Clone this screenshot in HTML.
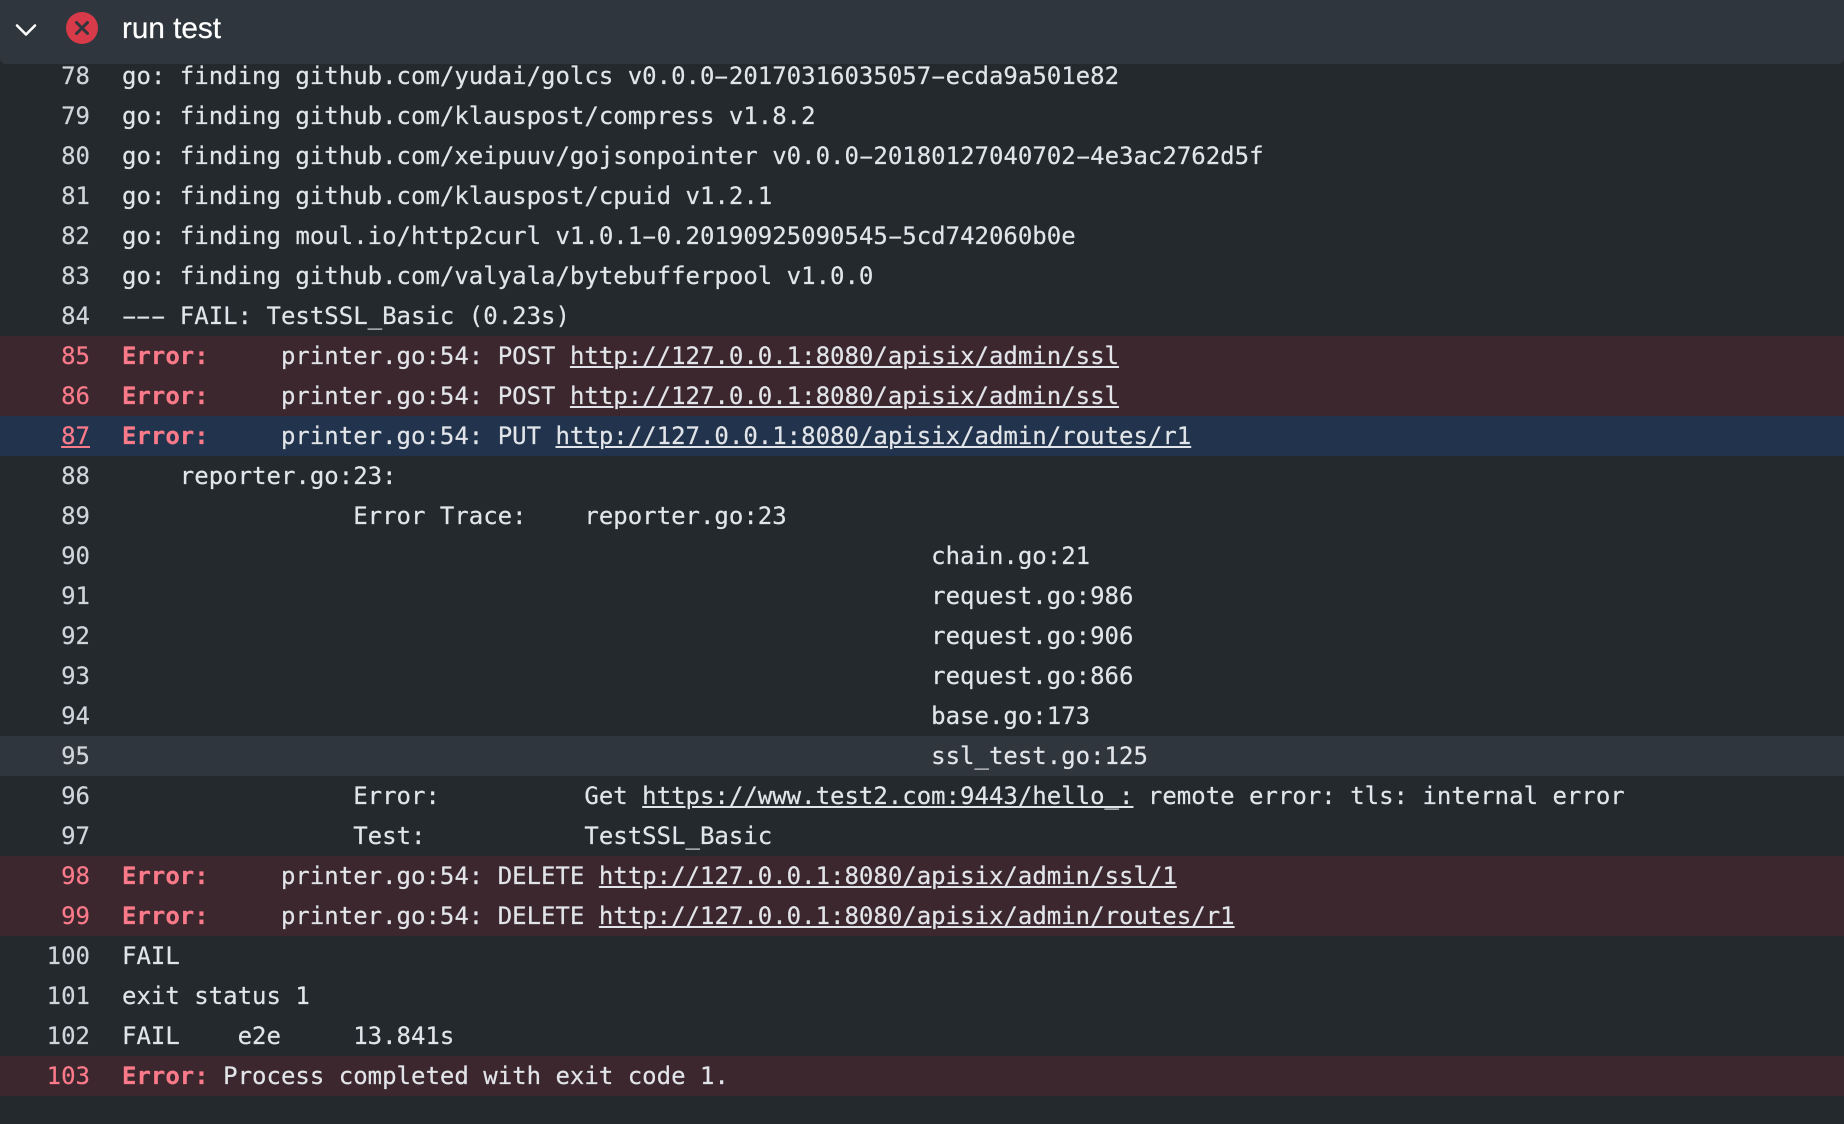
<!DOCTYPE html>
<html><head><meta charset="utf-8"><style>
html,body{margin:0;padding:0;background:#24292e}
body{width:1844px;height:1124px;overflow:hidden;position:relative}
#log{position:absolute;left:0;top:56px;width:1844px;font:24px/40px "DejaVu Sans Mono",monospace;color:#e1e4e8;-webkit-text-stroke:.2px currentColor}
.r{height:40px;position:relative;white-space:pre}
.n{position:absolute;left:0;width:90px;text-align:right;color:#d1d5da}
.t{position:absolute;left:122px}
.e{background:#3c272e}.e .n{color:#fb7a8a}
.b{background:#22344d}
.h{background:#2f363d}
b{color:#fb7a8a;font-weight:bold}
u{text-underline-offset:2px;text-decoration-thickness:2px}
i{font-style:normal;display:inline-block;transform:scaleX(1.85)}
#hd{position:absolute;left:0;top:0;width:1844px;height:64px;background:#2f363d;border-radius:0 0 6px 6px}
#ttl{position:absolute;left:122px;top:0;font:29.7px/57px "Liberation Sans",sans-serif;color:#fff;-webkit-text-stroke:.25px #fff}
svg{position:absolute}
</style></head><body>
<div id="log">
<div class="r"><span class="n">78</span><span class="t">go: finding github.com/yudai/golcs v0.0.0<i>-</i>20170316035057<i>-</i>ecda9a501e82</span></div>
<div class="r"><span class="n">79</span><span class="t">go: finding github.com/klauspost/compress v1.8.2</span></div>
<div class="r"><span class="n">80</span><span class="t">go: finding github.com/xeipuuv/gojsonpointer v0.0.0<i>-</i>20180127040702<i>-</i>4e3ac2762d5f</span></div>
<div class="r"><span class="n">81</span><span class="t">go: finding github.com/klauspost/cpuid v1.2.1</span></div>
<div class="r"><span class="n">82</span><span class="t">go: finding moul.io/http2curl v1.0.1<i>-</i>0.20190925090545<i>-</i>5cd742060b0e</span></div>
<div class="r"><span class="n">83</span><span class="t">go: finding github.com/valyala/bytebufferpool v1.0.0</span></div>
<div class="r"><span class="n">84</span><span class="t"><i>-</i><i>-</i><i>-</i> FAIL: TestSSL_Basic (0.23s)</span></div>
<div class="r e"><span class="n">85</span><span class="t"><b>Error:</b>     printer.go:54: POST <u>http://127.0.0.1:8080/apisix/admin/ssl</u></span></div>
<div class="r e"><span class="n">86</span><span class="t"><b>Error:</b>     printer.go:54: POST <u>http://127.0.0.1:8080/apisix/admin/ssl</u></span></div>
<div class="r e b"><span class="n"><u>87</u></span><span class="t"><b>Error:</b>     printer.go:54: PUT <u>http://127.0.0.1:8080/apisix/admin/routes/r1</u></span></div>
<div class="r"><span class="n">88</span><span class="t">    reporter.go:23:</span></div>
<div class="r"><span class="n">89</span><span class="t">                Error Trace:    reporter.go:23</span></div>
<div class="r"><span class="n">90</span><span class="t">                                                        chain.go:21</span></div>
<div class="r"><span class="n">91</span><span class="t">                                                        request.go:986</span></div>
<div class="r"><span class="n">92</span><span class="t">                                                        request.go:906</span></div>
<div class="r"><span class="n">93</span><span class="t">                                                        request.go:866</span></div>
<div class="r"><span class="n">94</span><span class="t">                                                        base.go:173</span></div>
<div class="r h"><span class="n">95</span><span class="t">                                                        ssl_test.go:125</span></div>
<div class="r"><span class="n">96</span><span class="t">                Error:          Get <u>https://www.test2.com:9443/hello_:</u> remote error: tls: internal error</span></div>
<div class="r"><span class="n">97</span><span class="t">                Test:           TestSSL_Basic</span></div>
<div class="r e"><span class="n">98</span><span class="t"><b>Error:</b>     printer.go:54: DELETE <u>http://127.0.0.1:8080/apisix/admin/ssl/1</u></span></div>
<div class="r e"><span class="n">99</span><span class="t"><b>Error:</b>     printer.go:54: DELETE <u>http://127.0.0.1:8080/apisix/admin/routes/r1</u></span></div>
<div class="r"><span class="n">100</span><span class="t">FAIL</span></div>
<div class="r"><span class="n">101</span><span class="t">exit status 1</span></div>
<div class="r"><span class="n">102</span><span class="t">FAIL    e2e     13.841s</span></div>
<div class="r e"><span class="n">103</span><span class="t"><b>Error:</b> Process completed with exit code 1.</span></div>
</div>
<div id="hd">
<svg style="left:14px;top:18px" width="24" height="24" viewBox="0 0 24 24"><path d="M3 7.5L12 16.5L21 7.5" fill="none" stroke="#fff" stroke-width="2.6" stroke-linecap="round" stroke-linejoin="round"/></svg>
<svg style="left:66px;top:12px" width="32" height="32" viewBox="0 0 32 32"><circle cx="16" cy="16" r="16" fill="#d73a49"/><path d="M10.5 10.5L21.5 21.5M21.5 10.5L10.5 21.5" fill="none" stroke="#2f363d" stroke-width="3" stroke-linecap="round"/></svg>
<div id="ttl">run test</div>
</div>
</body></html>
